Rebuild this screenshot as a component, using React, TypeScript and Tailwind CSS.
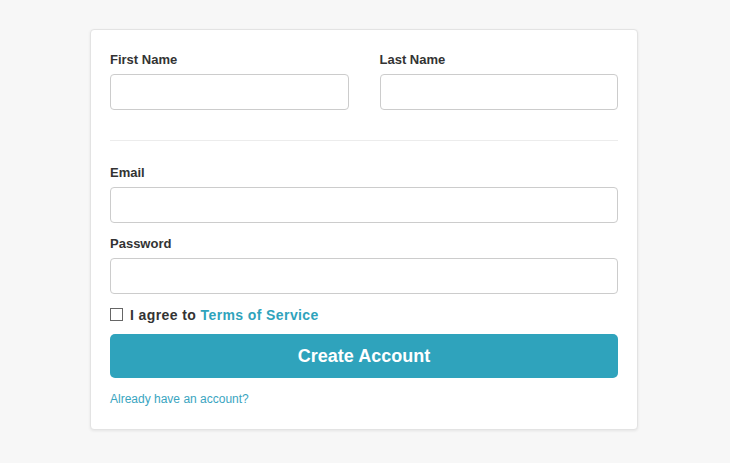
import React from "react";

export default function App() {
  const font = { fontFamily: '"Liberation Sans", Arial, sans-serif' };
  const labelCls = "block pt-px mb-[6px] text-[13px] font-bold leading-[16px] text-[#333]";
  const inputCls = "block h-[36px] w-full rounded-[4px] border border-[#cccccc] bg-white px-2 outline-none";
  return (
    <div className="min-h-[463px] w-full bg-[#f7f7f7] pt-[29px] pr-[2px]" style={font}>
      <div className="mx-auto w-[548px] rounded-[4px] border border-[#e3e3e3] bg-white px-[19px] pt-[21px] pb-[23px] shadow-[0_1px_3px_rgba(0,0,0,0.08)]">
        <div className="grid grid-cols-2 gap-x-[31px]">
          <div>
            <label className={labelCls}>First Name</label>
            <input className={inputCls} />
          </div>
          <div>
            <label className={labelCls}>Last Name</label>
            <input className={inputCls} />
          </div>
        </div>
        <div className="mt-[30px] h-px w-full bg-[#ececec]" />
        <label className={"mt-[23px] " + labelCls}>Email</label>
        <input type="email" className={inputCls} />
        <label className={"mt-[12px] " + labelCls}>Password</label>
        <input type="password" className={inputCls} />
        <div className="mt-[12px] flex h-[16px] items-center">
          <span className="mr-[7px] inline-block h-[13px] w-[13px] border border-[#666] bg-white" />
          <span className="pt-px text-[14px] font-bold leading-[16px] tracking-[0.4px] text-[#333]">
            I agree to <span className="text-[#2fa3bc]">Terms of Service</span>
          </span>
        </div>
        <button className="mt-[12px] flex h-[44px] w-full items-center justify-center rounded-[5px] bg-[#2fa3bc] text-[18px] font-bold text-white">
          Create Account
        </button>
        <div className="mt-[14px] text-[12px] leading-[14px] text-[#3aa5bf]">Already have an account?</div>
      </div>
    </div>
  );
}
